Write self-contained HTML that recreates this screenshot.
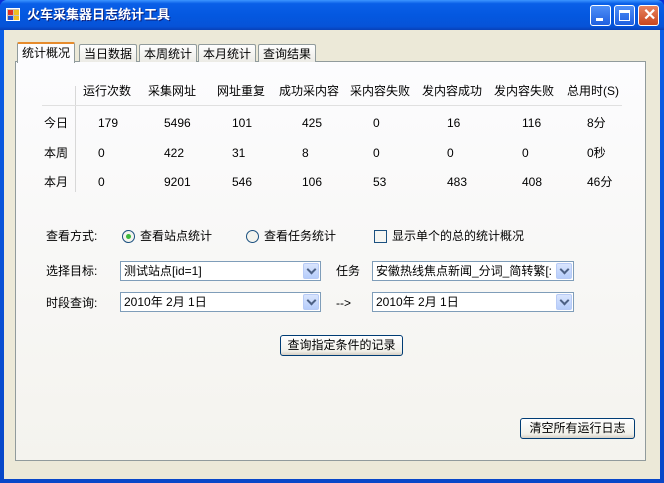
<!DOCTYPE html><html><head><meta charset="utf-8"><style>
*{margin:0;padding:0;box-sizing:border-box}
body{width:664px;height:483px;overflow:hidden;background:#0831d9;font-family:"Liberation Sans","Noto Sans CJK SC",sans-serif;font-size:12px;color:#000}
.a{position:absolute;white-space:nowrap;line-height:14px}
#win{position:absolute;left:0;top:0;width:664px;height:483px;background:linear-gradient(#0a5fe8,#0847c8);border-radius:7px 7px 0 0}
#title{position:absolute;left:0;top:0;width:664px;height:30px;background:linear-gradient(#3d95ff 0%,#0a5fe8 12%,#0458e0 50%,#0653d8 88%,#0841b8 100%);border-radius:7px 7px 0 0}
#client{position:absolute;left:4px;top:30px;width:656px;height:449px;background:#ece9d8}
#panel{position:absolute;left:15px;top:61px;width:631px;height:400px;border:1px solid #919b9c;background:linear-gradient(#fcfcfe,#f4f3ee)}
.tab{position:absolute;top:44px;height:18px;border:1px solid #919b9c;border-bottom:none;background:linear-gradient(#fefefe,#ecebe6);border-radius:2px 2px 0 0;padding:2px 4px 0;font-size:12px;line-height:14px}
.sel{top:42px;height:21px;background:#fcfcfe;border-top:2px solid #e68b2c;z-index:2}
.cb{position:absolute;height:20px;border:1px solid #7f9db9;background:#fff;padding:2px 3px;line-height:14px}
.dd{position:absolute;right:1px;top:1px;width:16px;height:16px;background:linear-gradient(#d9e5fd,#b6cdfb);border-radius:2px;border:1px solid #b8cbf6}
.dd:after{content:"";position:absolute;left:4px;top:2px;width:5px;height:5px;border-right:2px solid #4d6185;border-bottom:2px solid #4d6185;transform:rotate(45deg)}
.btn{position:absolute;height:21px;border:1px solid #003c74;border-radius:3px;background:linear-gradient(#fff,#f0efe8 80%,#d6d0c5);text-align:center;line-height:18px}
.wb{position:absolute;top:5px;width:21px;height:21px;border:1px solid #fff;border-radius:3px;background:linear-gradient(#4f8ff7,#1f5fe0)}
</style></head><body>
<div id="win"></div>
<div id="title">
<div style="position:absolute;left:6px;top:8px;width:14px;height:13px;background:#c0c0c0;border:1px solid #fff"><div style="position:absolute;left:1px;top:1px;width:5px;height:5px;background:#e03020"></div><div style="position:absolute;left:7px;top:1px;width:5px;height:5px;background:#f0c020"></div><div style="position:absolute;left:1px;top:7px;width:5px;height:4px;background:#2050d0"></div><div style="position:absolute;left:7px;top:7px;width:5px;height:4px;background:#f0c020"></div></div>
<div class="a" style="left:27px;top:7px;color:#fff;font-weight:bold;font-size:13px;line-height:16px;text-shadow:1px 1px #0a1e7a">火车采集器日志统计工具</div>
<div class="wb" style="left:590px"><div style="position:absolute;left:5px;top:12px;width:7px;height:3px;background:#fff"></div></div>
<div class="wb" style="left:614px"><div style="position:absolute;left:4px;top:4px;width:11px;height:11px;border:1px solid #fff;border-top:3px solid #fff"></div></div>
<div class="wb" style="left:638px;background:linear-gradient(#e8835f,#c9461f)"><div class="a" style="left:4px;top:1px;color:#fff;font-weight:bold;font-size:16px;line-height:18px">✕</div></div>
</div>
<div id="client"></div>
<div id="panel"></div>
<div class="tab sel" style="left:17px">统计概况</div>
<div class="tab" style="left:79px">当日数据</div>
<div class="tab" style="left:139px">本周统计</div>
<div class="tab" style="left:198px">本月统计</div>
<div class="tab" style="left:258px">查询结果</div>

<div style="position:absolute;left:75px;top:86px;width:1px;height:106px;background:#d8d8d8"></div>
<div style="position:absolute;left:42px;top:105px;width:580px;height:1px;background:#e0e0e0"></div>
<div class="a" style="left:83px;top:84px">运行次数</div>
<div class="a" style="left:148px;top:84px">采集网址</div>
<div class="a" style="left:217px;top:84px">网址重复</div>
<div class="a" style="left:279px;top:84px">成功采内容</div>
<div class="a" style="left:350px;top:84px">采内容失败</div>
<div class="a" style="left:422px;top:84px">发内容成功</div>
<div class="a" style="left:494px;top:84px">发内容失败</div>
<div class="a" style="left:567px;top:84px">总用时(S)</div>

<div class="a" style="left:44px;top:116px">今日</div>
<div class="a" style="left:98px;top:116px">179</div><div class="a" style="left:164px;top:116px">5496</div><div class="a" style="left:232px;top:116px">101</div><div class="a" style="left:302px;top:116px">425</div><div class="a" style="left:373px;top:116px">0</div><div class="a" style="left:447px;top:116px">16</div><div class="a" style="left:522px;top:116px">116</div><div class="a" style="left:587px;top:116px">8分</div>
<div class="a" style="left:44px;top:146px">本周</div>
<div class="a" style="left:98px;top:146px">0</div><div class="a" style="left:164px;top:146px">422</div><div class="a" style="left:232px;top:146px">31</div><div class="a" style="left:302px;top:146px">8</div><div class="a" style="left:373px;top:146px">0</div><div class="a" style="left:447px;top:146px">0</div><div class="a" style="left:522px;top:146px">0</div><div class="a" style="left:587px;top:146px">0秒</div>
<div class="a" style="left:44px;top:175px">本月</div>
<div class="a" style="left:98px;top:175px">0</div><div class="a" style="left:164px;top:175px">9201</div><div class="a" style="left:232px;top:175px">546</div><div class="a" style="left:302px;top:175px">106</div><div class="a" style="left:373px;top:175px">53</div><div class="a" style="left:447px;top:175px">483</div><div class="a" style="left:522px;top:175px">408</div><div class="a" style="left:587px;top:175px">46分</div>

<div class="a" style="left:46px;top:229px">查看方式:</div>
<div style="position:absolute;left:122px;top:230px;width:13px;height:13px;border:1px solid #1c5180;border-radius:50%;background:#f4f4ee"><div style="position:absolute;left:3px;top:3px;width:5px;height:5px;border-radius:50%;background:#3cb83c"></div></div>
<div class="a" style="left:140px;top:229px">查看站点统计</div>
<div style="position:absolute;left:246px;top:230px;width:13px;height:13px;border:1px solid #1c5180;border-radius:50%;background:#f4f4ee"></div>
<div class="a" style="left:264px;top:229px">查看任务统计</div>
<div style="position:absolute;left:374px;top:230px;width:13px;height:13px;border:1px solid #1c5180;background:#f6f6f2"></div>
<div class="a" style="left:392px;top:229px">显示单个的总的统计概况</div>

<div class="a" style="left:46px;top:264px">选择目标:</div>
<div class="cb" style="left:120px;top:261px;width:201px">测试站点[id=1]<div class="dd"></div></div>
<div class="a" style="left:336px;top:264px">任务</div>
<div class="cb" style="left:372px;top:261px;width:202px;overflow:hidden">安徽热线焦点新闻_分词_简转繁[:<div class="dd"></div></div>

<div class="a" style="left:46px;top:296px">时段查询:</div>
<div class="cb" style="left:120px;top:292px;width:201px">2010年 2月 1日<div class="dd"></div></div>
<div class="a" style="left:336px;top:296px">--&gt;</div>
<div class="cb" style="left:372px;top:292px;width:202px">2010年 2月 1日<div class="dd"></div></div>

<div class="btn" style="left:280px;top:335px;width:123px">查询指定条件的记录</div>
<div class="btn" style="left:520px;top:418px;width:115px">清空所有运行日志</div>
</body></html>
